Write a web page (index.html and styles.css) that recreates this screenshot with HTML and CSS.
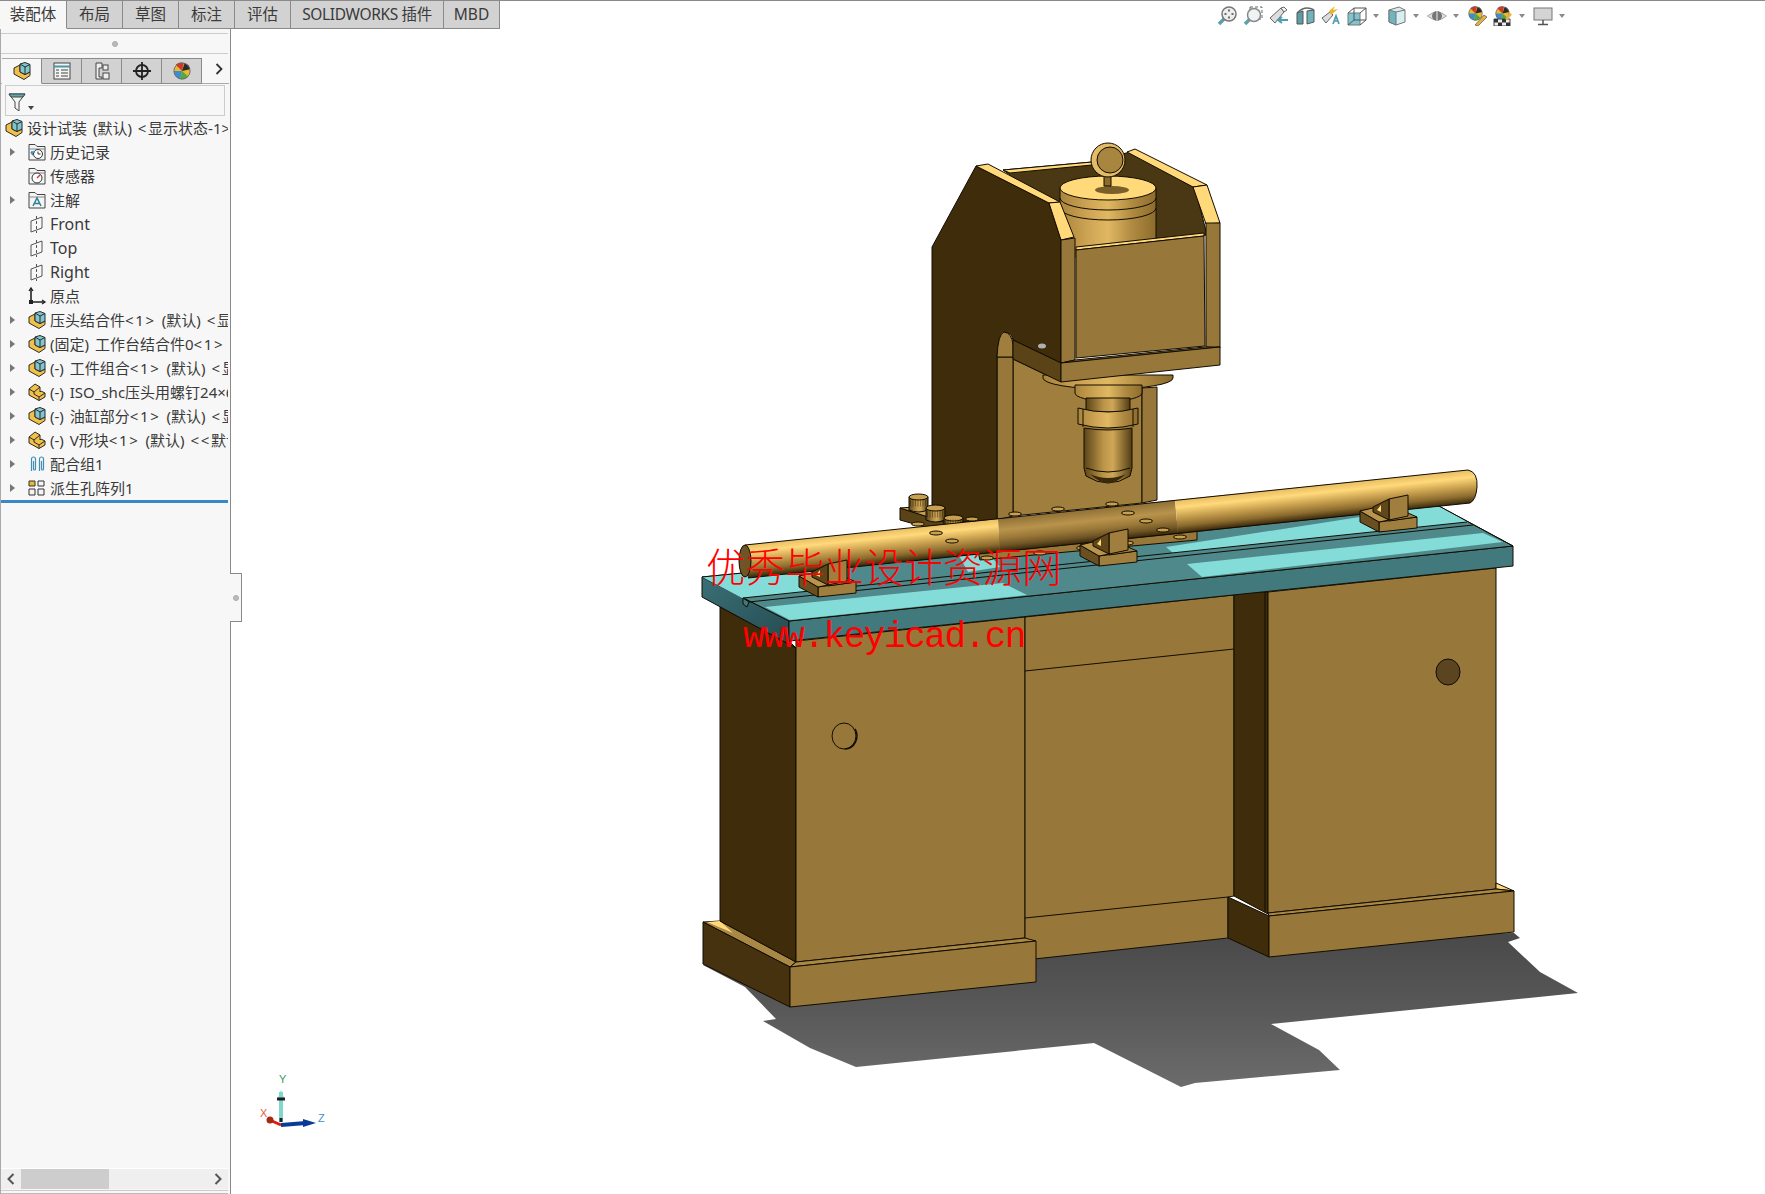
FILE: index.html
```html
<!DOCTYPE html>
<html lang="zh-CN">
<head>
<meta charset="utf-8">
<title>设计试装</title>
<link rel="stylesheet" href="styles.css">
</head>
<body>
<svg class="defs" width="0" height="0" aria-hidden="true">
  <defs>
    <symbol id="i-asm" viewBox="0 0 18 18">
      <path d="M1 6 L7 3 V10 L12 12.500 L17 10 V13.500 L11 17.500 L1 12Z" fill="#f0c048" stroke="#2a2a2a"/>
      <path d="M7 2 L12 0.500 L17 2.500 V10 L12 12.500 L7 10Z" fill="#7fc6cf" stroke="#2a2a2a"/>
      <path d="M7 2 L12 5 L17 2.500 M12 5 V12.500" fill="none" stroke="#2a2a2a"/>
    </symbol>
    <symbol id="i-part" viewBox="0 0 18 18">
      <path d="M1 6 L7 1 L12 4 V9 L13 8 L17 10 V14 L11 17.500 L1 12Z" fill="#f0c048" stroke="#2a2a2a"/>
      <path d="M1 6 L6 9 L12 4 M6 9 V11 L11 14 L17 10 M11 14 V17.500" fill="none" stroke="#2a2a2a"/>
    </symbol>
    <symbol id="i-folder" viewBox="0 0 18 18">
      <path d="M1 17 V1.500 H7 L9 3.500 H17 V17Z" fill="#f4f4f4" stroke="#444"/>
      <path d="M1 6 H17" stroke="#888"/>
    </symbol>
    <symbol id="i-plane" viewBox="0 0 18 18">
      <path d="M3 6 L14 2 V13 L3 17Z" fill="none" stroke="#555"/>
      <path d="M8.500 1 V18" fill="none" stroke="#555" stroke-dasharray="3 2"/>
    </symbol>
    <symbol id="i-ball" viewBox="0 0 20 20">
      <circle cx="10" cy="10" r="9" fill="#e9b92e"/>
      <path d="M10 10 L3 3 A9 9 0 0 1 12 1Z" fill="#d0392b"/>
      <path d="M10 10 L1 10 A9 9 0 0 0 8 19Z" fill="#3b8fd0"/>
      <path d="M10 10 L8 19 A9 9 0 0 0 17 16Z" fill="#55a84a"/>
      <path d="M10 10 L13 1 A9 9 0 0 1 19 8Z" fill="#2a2a2a"/>
      <circle cx="10" cy="10" r="9" fill="none" stroke="#666"/>
    </symbol>
  </defs>
</svg>

<div class="app">
  <header class="topbar">
    <nav class="cmd-tabs">
      <span class="cmd-tab is-active">装配体</span>
      <span class="cmd-tab">布局</span>
      <span class="cmd-tab">草图</span>
      <span class="cmd-tab">标注</span>
      <span class="cmd-tab">评估</span>
      <span class="cmd-tab cmd-tab-wide">SOLIDWORKS 插件</span>
      <span class="cmd-tab">MBD</span>
    </nav>
    <div class="view-tools">
      <svg class="vt" viewBox="0 0 20 20"><path d="M8 12 L2 18" stroke="#5d9fad" stroke-width="3.500"/><circle cx="12" cy="8" r="7" fill="#eee" stroke="#777" stroke-width="1.500"/><path d="M12 3.500 V5.500 M12 10.500 V12.500 M7.500 8 H9.500 M14.500 8 H16.500" stroke="#444" stroke-width="1.500"/></svg>
      <svg class="vt" viewBox="0 0 20 20"><rect x="7" y="1" width="12" height="12" fill="none" stroke="#666" stroke-dasharray="3 2"/><path d="M7 13 L2 18" stroke="#5d9fad" stroke-width="3.500"/><circle cx="11" cy="9" r="6.500" fill="#eef3f3" stroke="#8a8a8a" stroke-width="1.500"/></svg>
      <svg class="vt" viewBox="0 0 20 20"><path d="M1 12 L12 2 L15 6 L6 17Z" fill="#ddd" stroke="#666"/><path d="M12 2 L15 1 L18 4 L15 6Z" fill="#f4f4f4" stroke="#666"/><path d="M19 14 H10 M13 11 L9 14 L13 17" fill="none" stroke="#4f9db0" stroke-width="2"/></svg>
      <svg class="vt" viewBox="0 0 20 20"><path d="M2 7 L8 5 V18 L2 18Z" fill="#5b9ea6" stroke="#555"/><path d="M12 5 L19 4 V16 L12 18Z" fill="#6fb4bb" stroke="#555"/><path d="M2 7 Q10 -1 19 4" fill="none" stroke="#666" stroke-width="1.500"/></svg>
      <svg class="vt" viewBox="0 0 20 20"><path d="M1 12 L9 6 L12 9 L5 17Z" fill="#ddd" stroke="#666"/><path d="M8 5 L14 0 L12 4 L17 3 L10 9Z" fill="#e9b530"/><path d="M12 18 L15 10 L18 18 M13.500 15 H16.500" fill="none" stroke="#4f9db0" stroke-width="1.700"/></svg>
      <svg class="vt" viewBox="0 0 20 20"><path d="M1 7 H13 V19 H1Z" fill="#7fc5cf" stroke="#777"/><path d="M1 7 L7 2 H19 L13 7 M19 2 V14 L13 19 M7 2 V14 H19 M7 14 L1 19" fill="none" stroke="#555"/></svg>
      <i class="dd"></i>
      <svg class="vt" viewBox="0 0 20 20"><path d="M2 4 L12 1 L18 4 V16 L9 19 L2 16Z" fill="#d8eef1" stroke="#777"/><path d="M2 4 L9 6 V19 L2 16Z" fill="#6fb4bf" stroke="#777"/><path d="M9 6 L18 4" stroke="#777"/></svg>
      <i class="dd"></i>
      <svg class="vt" viewBox="0 0 20 20"><path d="M0.500 10 Q10 2 19.500 10 Q10 18 0.500 10Z" fill="#ddd" stroke="#aaa"/><circle cx="10" cy="10" r="5" fill="#777"/><path d="M10 5 V15" stroke="#eee"/></svg>
      <i class="dd"></i>
      <svg class="vt" viewBox="0 0 20 20"><use href="#i-ball" width="15" height="15" x="1" y="0"/><path d="M8 19 L17 9 L20 11 L11 20Z" fill="#e8b23a" stroke="#555" stroke-width=".7"/></svg>
      <svg class="vt" viewBox="0 0 20 20"><use href="#i-ball" width="15" height="15" x="2" y="0"/><path d="M1 13 H17 V20 H1Z" fill="#eee" stroke="#444"/><path d="M1 13 H5 V16.500 H9 V13 H13 V16.500 H17 V20 H13 V16.500 H9 V20 H5 V16.500 H1Z" fill="#333"/><path d="M12 13 L17 7 L19 8.500 L14 14Z" fill="#e8b23a"/></svg>
      <i class="dd"></i>
      <svg class="vt" viewBox="0 0 20 20"><rect x="1" y="2" width="18" height="12" fill="#d4d4d4" stroke="#777"/><path d="M10 14 V18 M5 18.500 H15" stroke="#555" stroke-width="1.500"/></svg>
      <i class="dd"></i>
    </div>
  </header>

  <div class="workspace">
    <aside class="panel">
      <div class="panel-grip"><i class="dot"></i></div>
      <div class="panel-tabs">
        <span class="ptab is-active"><svg class="ico"><use href="#i-asm"/></svg></span>
        <span class="ptab"><svg class="ico" viewBox="0 0 18 18"><rect x="1" y="1" width="16" height="16" fill="#f4f4f4" stroke="#444"/><path d="M1 4.500 H17" stroke="#4b97a5" stroke-width="2"/><path d="M3 8 H6 M8 8 H15 M3 11 H6 M8 11 H15 M3 14 H6 M8 14 H15" stroke="#444"/></svg></span>
        <span class="ptab"><svg class="ico" viewBox="0 0 18 18"><path d="M3 1 H9 V6 H6 V15 H9 V17 H3Z" fill="#eee" stroke="#444"/><rect x="10" y="3" width="5" height="5" fill="#eee" stroke="#444"/><rect x="10" y="11" width="6" height="6" fill="#eee" stroke="#444"/></svg></span>
        <span class="ptab"><svg class="ico" viewBox="0 0 18 18"><circle cx="9" cy="9" r="6" fill="none" stroke="#222" stroke-width="1.800"/><path d="M9 0 V18 M0 9 H18" stroke="#222" stroke-width="1.800"/></svg></span>
        <span class="ptab"><svg class="ico"><use href="#i-ball"/></svg></span>
        <svg class="chev chev-tabs" viewBox="0 0 8 12"><path d="M1.500 1 L6.500 6 L1.500 11" fill="none" stroke="#333" stroke-width="1.800"/></svg>
      </div>
      <div class="filter">
        <svg class="funnel" viewBox="0 0 18 18"><path d="M1 1 H17 L11 9 V18 L7 15 V9Z" fill="#f4f4f4" stroke="#444"/><path d="M1 1 H17 L15 4 H3Z" fill="#5ea7b4" stroke="#444"/></svg>
        <i class="dd dd-small"></i>
      </div>
      <ul class="tree">
        <li class="row row-root"><svg class="ico"><use href="#i-asm"/></svg><span class="lbl">设计试装 (默认) <span class="gl">&lt;</span>显示状态-1<span class="gl">&gt;</span></span></li>
        <li class="row has-kids"><svg class="ico" viewBox="0 0 18 18"><use href="#i-folder" width="18" height="18"/><circle cx="10" cy="11" r="4.500" fill="#fff" stroke="#333"/><path d="M10 8.500 V11 H12.500" fill="none" stroke="#333"/><path d="M3 9 H7 M3 9 L5 12" stroke="#3d88b5" stroke-width="1.500"/></svg><span class="lbl">历史记录</span></li>
        <li class="row"><svg class="ico" viewBox="0 0 18 18"><use href="#i-folder" width="18" height="18"/><circle cx="9" cy="11" r="5" fill="#fff" stroke="#333"/><path d="M9 11 L12 8" stroke="#d33" stroke-width="1.500"/></svg><span class="lbl">传感器</span></li>
        <li class="row has-kids"><svg class="ico" viewBox="0 0 18 18"><use href="#i-folder" width="18" height="18"/><path d="M5 15 L9 7 L13 15 M6.500 12.500 H11.500" fill="none" stroke="#2f7f94" stroke-width="1.500"/></svg><span class="lbl">注解</span></li>
        <li class="row"><svg class="ico"><use href="#i-plane"/></svg><span class="lbl lbl-latin">Front</span></li>
        <li class="row"><svg class="ico"><use href="#i-plane"/></svg><span class="lbl lbl-latin">Top</span></li>
        <li class="row"><svg class="ico"><use href="#i-plane"/></svg><span class="lbl lbl-latin">Right</span></li>
        <li class="row"><svg class="ico" viewBox="0 0 18 18"><path d="M3 1 V15 H17" fill="none" stroke="#222" stroke-width="1.600"/><path d="M1 4 L3 1 L5 4 M14 13 L17 15 L14 17" fill="none" stroke="#222" stroke-width="1.300"/><rect x="1" y="13" width="4" height="4" fill="#222"/></svg><span class="lbl">原点</span></li>
        <li class="row has-kids"><svg class="ico"><use href="#i-asm"/></svg><span class="lbl">压头结合件<span class="gl">&lt;1&gt;</span> (默认) <span class="gl">&lt;</span>显示状态-1&gt;</span></li>
        <li class="row has-kids"><svg class="ico"><use href="#i-asm"/></svg><span class="lbl">(固定) 工作台结合件0<span class="gl">&lt;1&gt;</span></span></li>
        <li class="row has-kids"><svg class="ico"><use href="#i-asm"/></svg><span class="lbl">(-) 工件组合<span class="gl">&lt;1&gt;</span> (默认) <span class="gl">&lt;</span>显示状态-1&gt;</span></li>
        <li class="row has-kids"><svg class="ico"><use href="#i-part"/></svg><span class="lbl">(-) ISO_shc压头用螺钉24×60</span></li>
        <li class="row has-kids"><svg class="ico"><use href="#i-asm"/></svg><span class="lbl">(-) 油缸部分<span class="gl">&lt;1&gt;</span> (默认) <span class="gl">&lt;</span>显示状态-1&gt;</span></li>
        <li class="row has-kids"><svg class="ico"><use href="#i-part"/></svg><span class="lbl">(-) V形块<span class="gl">&lt;1&gt;</span> (默认) <span class="gl">&lt;&lt;</span>默认&gt;_显示状态</span></li>
        <li class="row has-kids"><svg class="ico" viewBox="0 0 18 18"><path d="M3.500 16 V4 A2 2 0 0 1 7.500 4 V14 A1 1 0 0 1 5.500 14 V6 M11.500 16 V4 A2 2 0 0 1 15.500 4 V14 A1 1 0 0 1 13.500 14 V6" fill="none" stroke="#3f8fb5" stroke-width="1.200"/></svg><span class="lbl">配合组1</span></li>
        <li class="row has-kids"><svg class="ico" viewBox="0 0 18 18"><path d="M1 2 H7 V7 H1Z" fill="#e9b92e" stroke="#333"/><path d="M10 2 H16 V7 H10Z M1 10 H7 V16 H1Z M10 10 H16 V16 H10Z" fill="#f4f4f4" stroke="#333"/></svg><span class="lbl">派生孔阵列1</span></li>
      </ul>
      <div class="tree-end"></div>
      <div class="hscroll">
        <svg class="chev" viewBox="0 0 8 12"><path d="M6.500 1 L1.500 6 L6.500 11" fill="none" stroke="#555" stroke-width="2"/></svg>
        <div class="hscroll-track"><div class="hscroll-thumb"></div></div>
        <svg class="chev" viewBox="0 0 8 12"><path d="M1.500 1 L6.500 6 L1.500 11" fill="none" stroke="#555" stroke-width="2"/></svg>
      </div>
      <div class="panel-foot"></div>
      <div class="panel-handle"><i class="dot"></i></div>
    </aside>

    <main class="viewport">
      <svg class="model" viewBox="231 29 1534 1165" xmlns="http://www.w3.org/2000/svg">
        <defs>
          <linearGradient id="shadow" gradientUnits="userSpaceOnUse" x1="0" y1="930" x2="0" y2="1087">
            <stop offset="0" stop-color="#484848"/><stop offset=".5" stop-color="#585858"/><stop offset="1" stop-color="#6c6c6c"/>
          </linearGradient>
          <linearGradient id="pipeB" gradientUnits="userSpaceOnUse" x1="1106" y1="507.500" x2="1109.400" y2="540.500">
            <stop offset="0" stop-color="#e8bd62"/><stop offset=".22" stop-color="#ffd97a"/><stop offset=".5" stop-color="#c9a04f"/><stop offset=".78" stop-color="#8a6a2d"/><stop offset="1" stop-color="#36260a"/>
          </linearGradient>
          <linearGradient id="pipeD" gradientUnits="userSpaceOnUse" x1="1106" y1="507.500" x2="1109.400" y2="540.500">
            <stop offset="0" stop-color="#8f7036"/><stop offset=".35" stop-color="#b8934c"/><stop offset=".6" stop-color="#9a7838"/><stop offset=".82" stop-color="#6f5525"/><stop offset="1" stop-color="#36260a"/>
          </linearGradient>
          <linearGradient id="cyl">
            <stop offset="0" stop-color="#a8843c"/><stop offset=".3" stop-color="#cfa555"/><stop offset=".5" stop-color="#e0b862"/><stop offset=".75" stop-color="#b08a42"/><stop offset="1" stop-color="#8c6c2c"/>
          </linearGradient>
          <linearGradient id="cylD">
            <stop offset="0" stop-color="#5a4417"/><stop offset=".4" stop-color="#bb9448"/><stop offset=".6" stop-color="#cfa757"/><stop offset="1" stop-color="#503c13"/>
          </linearGradient>
          <linearGradient id="tside" x1="0" y1="0" x2="1" y2="1">
            <stop offset="0" stop-color="#3a7076"/><stop offset="1" stop-color="#23494f"/>
          </linearGradient>
          <g id="support">
            <path class="e" fill="#a07e3d" d="M818 587 L856 582 V593 L818 597Z"/>
            <path class="e" fill="#6a5020" d="M799 576 L818 587 V597 L799 587Z"/>
            <path class="e" fill="#b9954c" d="M799 576 L812 573 L828 585 L818 587Z"/>
            <path class="e" fill="#a07e3d" d="M847 578 L856 582 L828 586 L828 581Z"/>
            <path class="e" fill="#a07e3d" d="M828 564 L847 560 V581 L828 585Z"/>
            <path class="e" fill="#5f4719" d="M828 564 L812 572 V577 L828 585Z"/>
            <path fill="#ffd97a" d="M816 575 L820 570 L820 577Z"/>
          </g>
        </defs>

        <!-- cast shadow -->
        <path fill="url(#shadow)" d="M703 965 L745 987 L776 1019 L763 1021 L810 1048 L856 1067 L1094 1043 L1181 1087 L1195 1083 L1340 1070 L1319 1050 L1271 1024 L1578 993 L1540 972 L1508 942 L1520 938 L1514 933 L1228 938 L1036 958Z"/>

        <!-- left pedestal -->
        <path class="e g3" d="M703 922 L720 921 L796 962 L790 967Z"/>
        <path class="y" d="M707 922 L720 921 L733 933Z"/>
        <path class="e d" d="M720 607 L796 648 V962 L720 921Z"/>
        <path class="e g" d="M796 641 L1025 617 V938 L796 962Z"/>
        <ellipse class="e g" cx="844" cy="736" rx="12" ry="13"/>
        <path class="thin" d="M855 729 A12 13 0 0 1 845 749"/>

        <!-- centre drawers -->
        <path class="e g" d="M1025 617 L1234 595 V896 L1228 897 V938 L1025 960Z"/>
        <path class="e none" d="M1025 671 L1234 649 M1025 918 L1228 897"/>

        <!-- right pedestal -->
        <path class="e d" d="M1234 593 L1268 592 V914 L1234 896Z"/>
        <path class="e none" d="M1265 592 V912"/>
        <path class="e g" d="M1268 592 L1496 568 V889 L1268 913Z"/>
        <ellipse class="e hd" cx="1448" cy="672" rx="12" ry="13"/>
        <path class="e y" d="M1496 883 L1514 891 L1496 889Z"/>
        <path class="e g3" d="M1268 913 L1496 889 L1514 891 L1269 916Z"/>
        <path class="e d" d="M1228 897 L1269 916 V957 L1228 938Z"/>
        <path class="e g" d="M1269 916 L1514 891 V932 L1269 957Z"/>

        <!-- left plinth -->
        <path class="e g3" d="M790 967 L796 962 L1025 938 L1036 941Z"/>
        <path class="e d2" d="M703 922 L790 967 V1007 L703 964Z"/>
        <path class="e g" d="M790 967 L1036 941 V982 L790 1007Z"/>

        <!-- table -->
        <path class="e" fill="url(#tside)" d="M702 577 L789 621 V641 L796 648 L702 597Z"/>
        <path class="e tf" d="M789 621 L1513 546 V566 L789 641Z"/>
        <path class="e ts" d="M702 577 L1437 505 L1513 546 L789 621Z"/>
        <path class="tl" d="M702 577 L742 598 L832 589 L812 566Z"/>
        <path class="tl" d="M957 552 L985 549 L1000 567 L968 572Z"/>
        <path class="tl" d="M1166 547 L1437 505 L1468 522 L1173 553Z"/>
        <path class="tl" d="M765 607 L1003 583 L1027 595 L790 620Z"/>
        <path class="tl" d="M1187 564 L1483 533 L1503 542 L1202 577Z"/>
        <path class="e none" d="M702 577 L1437 505 L1513 546"/>
        <path class="e none" d="M743 598 L1467 522 M749 602 L1473 525"/>
        <path class="e tf" d="M743 598 V604 L747 607 L749 602Z"/>

        <!-- press column, rear -->
        <path class="e dk2" d="M1003 170 L1092 162 L1130 152 L1195 188 L1207 235 L1060 250 L1010 175Z"/>
        <path class="e y" d="M1003 170 L1092 162 V165 L1010 173Z"/>

        <!-- ram cylinder on top -->
        <rect x="1060" y="188" width="96" height="70" fill="url(#cyl)"/>
        <path class="e none" d="M1060 188 V255 M1156 188 V240"/>
        <path class="e none" d="M1060 198 A48 12 0 0 0 1156 198 M1060 208 A48 12 0 0 0 1156 208"/>
        <ellipse class="e y" cx="1108" cy="188" rx="48" ry="12"/>
        <ellipse class="sh" cx="1112" cy="190" rx="17" ry="4"/>

        <!-- gauge -->
        <path class="e" fill="#8c6c2c" d="M1104 176 H1111 V186 H1104Z"/>
        <circle class="e" cx="1108" cy="160" r="17" fill="#e4bc68"/>
        <circle class="e" cx="1110" cy="160" r="13" fill="#a88640"/>

        <!-- throat + flange + ram -->
        <path class="e g2" d="M1013 359 L1061 382 L1142 388 V503 L1013 516Z"/>
        <path class="e g" d="M1142 388 L1157 387 V500 L1142 503Z"/>
        <path class="e g" d="M997 357 H1013 V516 L997 520Z"/>
        <path fill="url(#cyl)" class="e" d="M1043 375 H1173 V378 A65 11 0 0 1 1043 378Z"/>
        <path fill="url(#cyl)" class="e" d="M1075 385 H1142 V393 A33 8 0 0 1 1075 393Z"/>
        <path fill="url(#cylD)" class="e" d="M1086 398 H1130 V412 H1086Z"/>
        <path fill="url(#cyl)" class="e" d="M1078 408 Q1108 416 1138 408 V424 Q1108 432 1078 424Z"/>
        <path class="e none" d="M1083 409 V427 M1133 409 V427"/>
        <path fill="url(#cylD)" class="e" d="M1084 428 Q1108 432 1132 428 V468 L1130 476 Q1108 490 1086 476 L1084 468Z"/>
        <path class="e none" d="M1086 468 Q1108 476 1130 468"/>
        <path fill="#3a2a0c" d="M1090 474 Q1108 492 1126 474 Q1108 482 1090 474Z"/>

        <!-- column side and head box -->
        <path class="e d" d="M976 166 L932 247 V523 L997 520 V357 Q998 334 1004 332 Q1012 333 1013 340 L1061 363 V240 L1049 203Z"/>
        <path class="e g2" d="M997 357 Q998 334 1004 332 Q1012 333 1013 345 V357Z"/>
        <path class="e d3" d="M1013 340 L1061 363 V382 L1013 359Z"/>
        <path class="e y" d="M976 166 L988 164 L1060 202 L1049 203Z"/>
        <path class="e y" d="M1049 203 L1060 202 L1074 237 L1061 240Z"/>
        <path class="e y" d="M1127 152 L1135 149 L1207 185 L1193 187Z"/>
        <path class="e y" d="M1193 187 L1207 185 L1220 223 L1206 224Z"/>
        <path class="e g" d="M1061 240 L1075 238 V360 L1061 363Z"/>
        <path class="e g" d="M1206 223 L1220 223 V348 L1206 347Z"/>
        <path class="e y" d="M1076 247 L1204 233 V236 L1076 250Z"/>
        <path class="e g" d="M1076 250 L1204 236 L1205 346 L1076 358Z"/>
        <path class="e g" d="M1075 360 L1205 347 L1220 347 L1061 363Z"/>
        <path class="e g" d="M1061 363 L1220 347 V365 L1061 382Z"/>
        <ellipse class="mark" cx="1042" cy="346" rx="4" ry="2.500"/>

        <!-- bolted bracket and rail behind the bar -->
        <path class="e d3" d="M900 508 L947 523 L936 530 L900 520Z"/>
        <path class="e y2" d="M900 508 L926 506 L950 520 L947 523Z"/>
        <path fill="url(#cylD)" class="e" d="M909 497 H928 V510 Q918 514 909 510Z"/>
        <ellipse class="e y2" cx="918.500" cy="497" rx="9.500" ry="3"/>
        <path class="knurl" d="M910 503 H927"/>
        <path fill="url(#cylD)" class="e" d="M926 508 H945 V520 Q935 524 926 520Z"/>
        <ellipse class="e y2" cx="935.500" cy="508" rx="9.500" ry="3"/>
        <path class="knurl" d="M927 514 H944"/>
        <path fill="url(#cylD)" class="e" d="M944 518 H963 V526 Q953 529 944 526Z"/>
        <ellipse class="e y2" cx="953.500" cy="518" rx="9.500" ry="3"/>
        <path class="knurl" d="M945 523 H962"/>
        <path class="e g" d="M975 540 L1197 520 V540 L980 560Z"/>
        <ellipse class="hole" cx="1040" cy="553" rx="6.500" ry="2"/>
        <ellipse class="hole" cx="1083" cy="548" rx="6.500" ry="2"/>
        <ellipse class="hole" cx="1127" cy="543" rx="6.500" ry="2"/>
        <ellipse class="hole" cx="1180" cy="537" rx="6.500" ry="2"/>
        <ellipse class="hole" cx="987" cy="558" rx="6.500" ry="2"/>

        <!-- work bar -->
        <path fill="url(#pipeB)" d="M745 545 L998 519 L1000 552 L748 578Z"/>
        <path fill="url(#pipeD)" d="M998 519 L1175 500 L1178 534 L1000 552Z"/>
        <path fill="url(#pipeB)" d="M1175 500 L1468 470 Q1478 472 1477 487 Q1476 500 1470 503 L1178 534Z"/>
        <path class="e none" d="M745 545 L1468 470 Q1478 472 1477 487 Q1476 500 1470 503 L748 578"/>
        <ellipse class="e pe" cx="745" cy="561" rx="6" ry="16"/>
        <ellipse class="hole" cx="972" cy="519" rx="6.500" ry="2"/>
        <ellipse class="hole" cx="918" cy="524" rx="6.500" ry="2"/>
        <ellipse class="hole" cx="1015" cy="514" rx="6.500" ry="2"/>
        <ellipse class="hole" cx="1058" cy="509" rx="6.500" ry="2"/>
        <ellipse class="hole" cx="1112" cy="504" rx="6.500" ry="2"/>
        <ellipse class="hole" cx="1128" cy="513" rx="6.500" ry="2"/>
        <ellipse class="hole" cx="1146" cy="521" rx="6.500" ry="2"/>
        <ellipse class="hole" cx="1163" cy="530" rx="6.500" ry="2"/>
        <ellipse class="hole" cx="936" cy="533" rx="6.500" ry="2"/>
        <ellipse class="hole" cx="952" cy="541" rx="6.500" ry="2"/>

        <use href="#support"/>
        <use href="#support" x="281" y="-31"/>
        <use href="#support" x="561" y="-65"/>

        <!-- triad -->
        <path d="M281 1122 V1092" stroke="#7fd8d0" stroke-width="4"/>
        <path d="M281 1090 L278 1098 H284Z" fill="#7fd8d0"/>
        <path d="M277 1099 H285" stroke="#1f1f1f" stroke-width="3"/>
        <path d="M281 1122 V1118" stroke="#1f1f1f" stroke-width="3"/>
        <path d="M281 1125 L272 1121" stroke="#e01a1a" stroke-width="3"/>
        <circle cx="270" cy="1120" r="3.500" fill="#a52a10"/>
        <path d="M281 1125 L306 1123" stroke="#0a3c96" stroke-width="4"/>
        <path d="M303 1119 L316 1123 L303 1127Z" fill="#0a3c96"/>
        <text class="ax ax-y" x="279" y="1083">Y</text>
        <text class="ax ax-x" x="260" y="1117">X</text>
        <text class="ax ax-z" x="318" y="1122">Z</text>
      </svg>
      <div class="wm wm-cn">优秀毕业设计资源网</div>
      <div class="wm wm-en">www.keyicad.cn</div>
    </main>
  </div>
</div>
</body>
</html>
```
FILE: styles.css
```css
* { box-sizing: border-box; }
html, body { margin: 0; height: 100%; overflow: hidden; background: #fff; }
body { font-family: "Noto Sans", "Noto Sans CJK SC", sans-serif; color: #333; }
.defs { position: absolute; }
.app { display: flex; flex-direction: column; height: 1194px; }

/* top bar */
.topbar { display: flex; height: 29px; border-top: 1px solid #8a8a8a; flex: none; }
.cmd-tabs { display: flex; width: 500px; flex: none; }
.cmd-tab {
  width: 56px; height: 28px; display: flex; align-items: center; justify-content: center;
  background: #d2d2d2; border-right: 1px solid #8a8a8a; border-bottom: 1px solid #8a8a8a;
  font-size: 15.500px; color: #3a3a3a; line-height: 1;
}
.cmd-tab.is-active { width: 67px; background: #f7f7f7; border-bottom-color: transparent; }
.cmd-tab-wide { width: 153px; letter-spacing: -0.350px; }
.view-tools { display: flex; align-items: center; margin-left: 717px; padding-top: 1px; height: 28px; }
.vt { width: 20px; height: 20px; margin-right: 6px; flex: none; }
.dd { display: block; width: 0; height: 0; border: 3.500px solid transparent; border-top: 4px solid #8a8a8a; border-bottom: 0; margin: 0 8px 0 0; flex: none; }

/* workspace */
.workspace { flex: 1; display: flex; min-height: 0; }
.panel {
  position: relative; width: 231px; flex: none; display: flex; flex-direction: column;
  background: #f7f7f7; border-left: 1px solid #aaa; border-right: 1px solid #8a8a8a;
}
.panel-grip {
  height: 21px; margin: 4px 2px 0 0; border-top: 1px solid #ccc; border-bottom: 1px solid #ccc;
  display: flex; align-items: center; justify-content: center; flex: none;
}
.dot { display: block; width: 6px; height: 6px; border-radius: 50%; background: #bbb; border: 1px solid #aaa; }
.panel-tabs { display: flex; height: 30px; padding: 4px 0 0 1px; border-bottom: 1px solid #aaa; position: relative; margin-right: 1px; flex: none; }
.ptab {
  width: 40px; height: 26px; display: flex; align-items: center; justify-content: center;
  background: #d2d2d2; border: 1px solid #8a8a8a; border-left: 0;
}
.ptab.is-active { background: #f7f7f7; border-top-color: #aaa; border-bottom-color: #f7f7f7; height: 26px; border-left: 0; }
.ico { width: 18px; height: 18px; flex: none; overflow: visible; }
.chev { width: 8px; height: 12px; flex: none; }
.chev-tabs { margin: 5px 0 0 13px; }
.filter {
  height: 31px; margin: 1px 5px 0 4px; border: 1px solid #ccc; flex: none;
  display: flex; align-items: flex-start; padding: 7px 0 0 2px;
}
.funnel { width: 18px; height: 18px; }
.dd-small { margin: 13px 0 0 2px; border-top-color: #444; }

/* tree */
.tree { list-style: none; margin: 0; padding: 0; width: 227px; overflow: hidden; flex: none; }
.row { height: 24px; display: flex; align-items: center; padding-left: 49px; white-space: nowrap; font-size: 15px; word-spacing: 2px; color: #3a3a3a; position: relative; line-height: 1; }
.row .ico { position: absolute; left: 27px; top: 3px; }
.row-root { padding-left: 26px; }
.row-root .ico { left: 4px; top: 3px; }
.lbl { display: block; }
.lbl-latin { font-size: 16px; }
.gl { letter-spacing: 1.700px; }
.has-kids::before {
  content: ""; position: absolute; left: 9px; top: 8px; width: 0; height: 0;
  border-left: 5px solid #777; border-top: 4px solid transparent; border-bottom: 4px solid transparent;
}
.tree-end { height: 3px; width: 227px; background: #3a87c8; margin-top: 0; flex: none; }
.hscroll { margin-top: auto; height: 21px; width: 227px; display: flex; align-items: center; background: #efefef; border-top: 1px solid #fff; padding: 0 6px; flex: none; }
.hscroll-track { flex: 1; height: 100%; margin: 0 8px 0 6px; }
.hscroll-thumb { width: 88px; height: 100%; background: #cdcdcd; }
.panel-foot { height: 4px; width: 227px; margin-top: 1px; border-top: 1px solid #ccc; border-bottom: 1px solid #bbb; flex: none; }
.panel-handle {
  position: absolute; left: 229px; top: 544px; width: 12px; height: 49px;
  background: #f7f7f7; border: 1px solid #8a8a8a; border-left: 0;
  display: flex; align-items: center; justify-content: center;
}

/* graphics viewport */
.viewport { position: relative; flex: 1; min-width: 0; }
.model { position: absolute; left: 0; top: 0; width: 1534px; height: 1165px; }
.e { stroke: #120c00; stroke-width: 1; stroke-linejoin: round; }
.none { fill: none; }
.thin { fill: none; stroke: #120c00; stroke-width: 1.500; }
.knurl { fill: none; stroke: #2a1e06; stroke-width: 7; stroke-dasharray: 1 1.500; opacity: .45; }
.g { fill: #97783a; }
.g2 { fill: #a07e3e; }
.g3 { fill: #a98744; }
.d { fill: #3f2c0b; }
.d2 { fill: #46320e; }
.d3 { fill: #5a4417; }
.dk2 { fill: #4a3714; }
.y { fill: #ffd97a; }
.y2 { fill: #c9a04f; }
.hd { fill: #5a4520; }
.tf { fill: #41797c; }
.ts { fill: #4f898c; }
.tl { fill: #84dcd8; }
.pe { fill: #6f5525; }
.sh { fill: #7a5f28; }
.mark { fill: #b0b0b0; }
.hole { fill: #c9a04f; stroke: #120c00; stroke-width: 1; }
.ax { font-family: "Liberation Sans", sans-serif; font-size: 11px; }
.ax-y { fill: #3c9a5c; }
.ax-x { fill: #e2603a; }
.ax-z { fill: #3f8fd0; }
.wm { position: absolute; color: #f00; white-space: nowrap; line-height: 1; }
.wm-cn { left: 475px; top: 516px; font-family: "Noto Sans CJK SC", sans-serif; font-weight: 300; font-size: 39.500px; }
.wm-en { left: 512px; top: 591px; font-family: "Liberation Mono", monospace; font-size: 36px; letter-spacing: -1.460px; }
```
